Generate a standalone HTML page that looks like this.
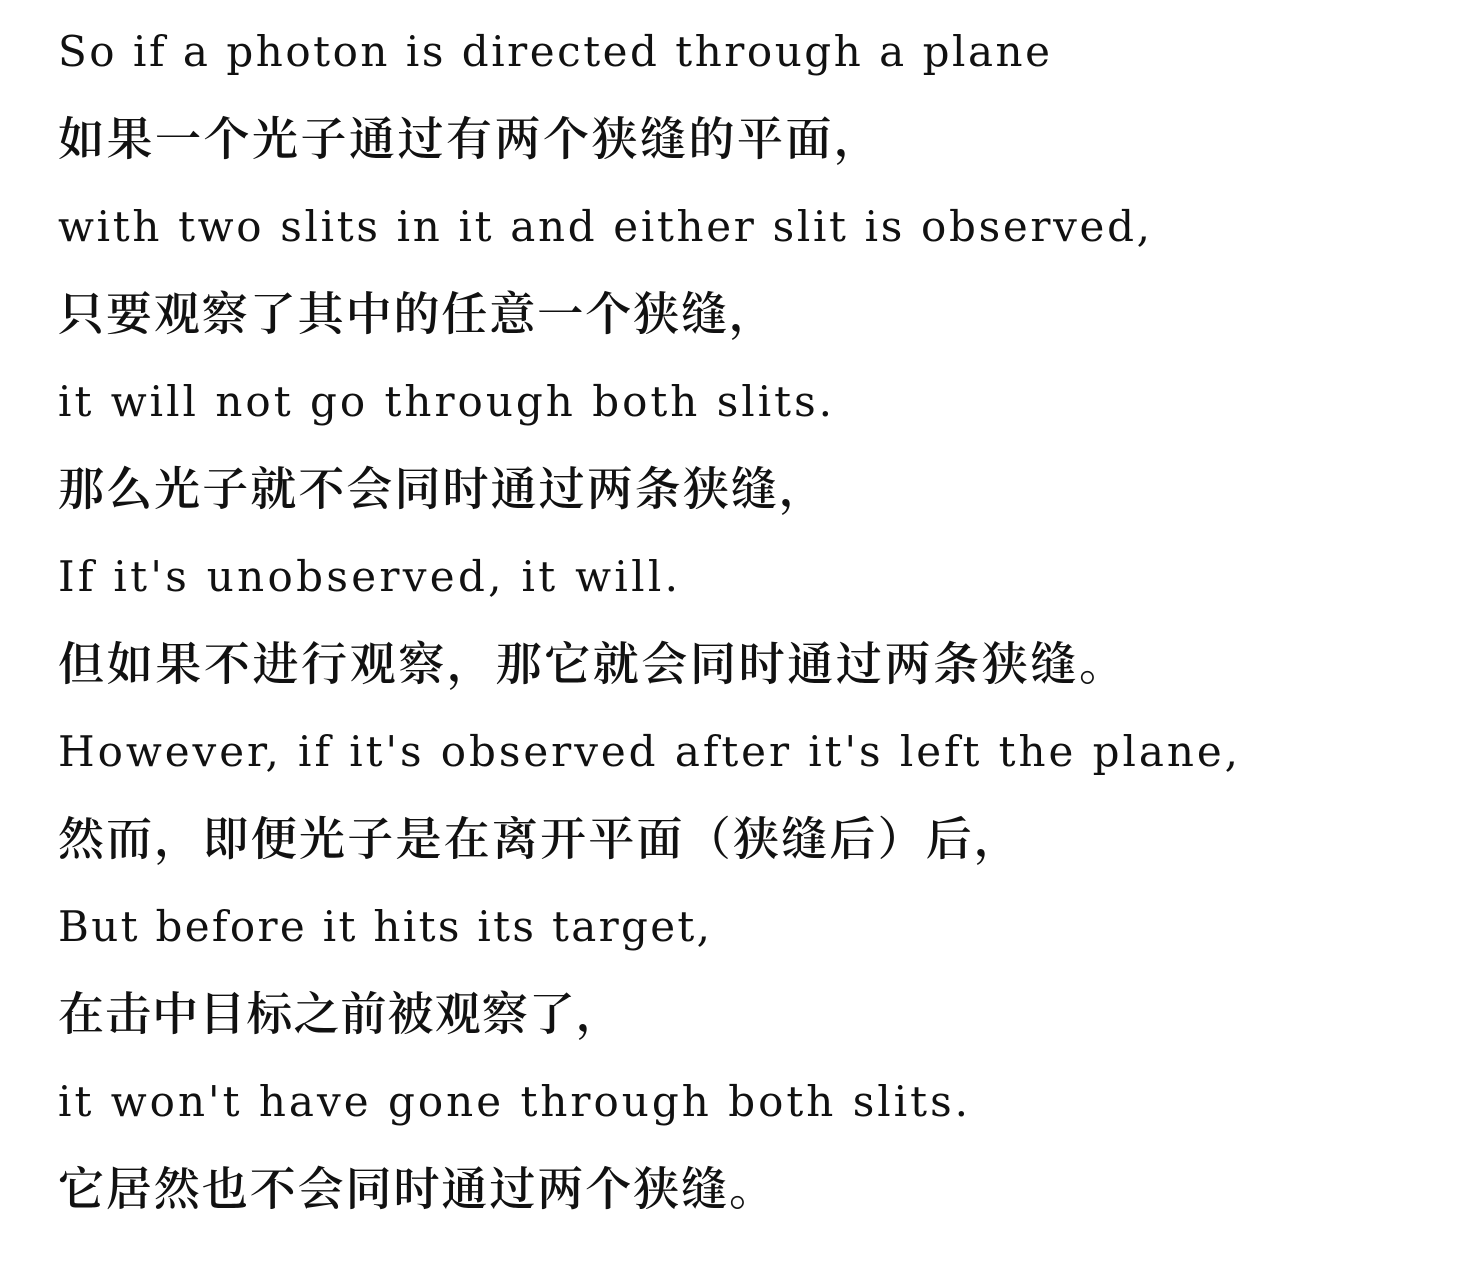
<!DOCTYPE html>
<html><head><meta charset="utf-8"><style>
html,body{margin:0;padding:0;background:#fff;}
svg{display:block}
.e{font-family:"DejaVu Serif","Liberation Serif",serif;font-size:42px;fill:#111;}
.c{font-family:"Liberation Serif","Noto Serif CJK SC",serif;font-size:46px;font-weight:600;fill:#111;}
</style></head><body>
<svg width="1464" height="1270" xmlns="http://www.w3.org/2000/svg">
<text class="e" x="58" y="66" textLength="992" lengthAdjust="spacing">So if a photon is directed through a plane</text>
<text class="c" x="58" y="155" textLength="822" lengthAdjust="spacing">如果一个光子通过有两个狭缝的平面，</text>
<text class="e" x="58" y="241" textLength="1092" lengthAdjust="spacing">with two slits in it and either slit is observed,</text>
<text class="c" x="58" y="330" textLength="717" lengthAdjust="spacing">只要观察了其中的任意一个狭缝，</text>
<text class="e" x="58" y="416" textLength="774" lengthAdjust="spacing">it will not go through both slits.</text>
<text class="c" x="58" y="505" textLength="767" lengthAdjust="spacing">那么光子就不会同时通过两条狭缝，</text>
<text class="e" x="58" y="591" textLength="620" lengthAdjust="spacing">If it's unobserved, it will.</text>
<text class="c" x="58" y="680" textLength="1067" lengthAdjust="spacing">但如果不进行观察，那它就会同时通过两条狭缝。</text>
<text class="e" x="58" y="766" textLength="1180" lengthAdjust="spacing">However, if it's observed after it's left the plane,</text>
<text class="c" x="58" y="855" textLength="962" lengthAdjust="spacing">然而，即便光子是在离开平面（狭缝后）后，</text>
<text class="e" x="58" y="941" textLength="652" lengthAdjust="spacing">But before it hits its target,</text>
<text class="c" x="58" y="1030" textLength="564" lengthAdjust="spacing">在击中目标之前被观察了，</text>
<text class="e" x="58" y="1116" textLength="910" lengthAdjust="spacing">it won't have gone through both slits.</text>
<text class="c" x="58" y="1205" textLength="717" lengthAdjust="spacing">它居然也不会同时通过两个狭缝。</text>
</svg>
</body></html>
